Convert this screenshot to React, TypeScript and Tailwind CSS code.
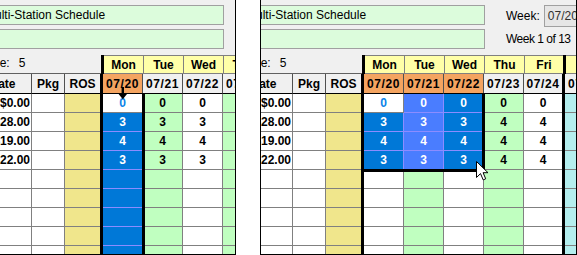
import React from "react";

type Variant = "left" | "right";
type Tone = "white" | "green" | "teal";
type Sel = "active" | "dark" | "light" | null;

const DAYS: { day: string; date: string; tone: Tone; w: string }[] = [
  { day: "Mon", date: "07/20", tone: "white", w: "w-[40px] border-r" },
  { day: "Tue", date: "07/21", tone: "green", w: "w-[40px] border-r" },
  { day: "Wed", date: "07/22", tone: "white", w: "w-[40px] border-r" },
  { day: "Thu", date: "07/23", tone: "green", w: "w-[40px] border-r" },
  { day: "Fri", date: "07/24", tone: "white", w: "w-[38px]" },
  { day: "", date: "07/25", tone: "teal", w: "w-[40px] border-r" },
];

const PRICES = ["$0.00", "$28.00", "$19.00", "$22.00"];
const QTY = [
  [0, 0, 0, 0, 0],
  [3, 3, 3, 4, 4],
  [4, 4, 4, 4, 4],
  [3, 3, 3, 4, 4],
];

const toneBg: Record<Tone, string> = {
  white: "bg-white",
  green: "bg-[#c0ffc0]",
  teal: "bg-[#b4eeee]",
};

const selCls = {
  active: "bg-white text-[#0a84e8] border-[#808080]",
  dark: "bg-[#0078d7] text-white border-[#8c8cff]",
  light: "bg-[#4a7dff] text-white border-[#8c8cff]",
};

function selState(v: Variant, r: number, c: number): Sel {
  if (v === "left") {
    if (c !== 0) return null;
    return r === 0 ? "active" : "dark";
  }
  if (r > 3 || c > 2) return null;
  if (r === 0 && c === 0) return "active";
  return c === 1 ? "light" : "dark";
}

function Sep() {
  return <div className="w-[3px] shrink-0 bg-black" />;
}

function Panel({ variant }: { variant: Variant }) {
  const orange = (c: number) => (variant === "left" ? c === 0 : c <= 2);

  return (
    <div className="relative w-[315px]">
      {/* title fields + week picker */}
      <div className="flex h-[55px] bg-[#f0f0f0]">
        <div className="-ml-[40px] flex w-[264px] shrink-0 flex-col gap-[4px] pt-[5px]">
          <div className="flex h-[20px] items-center border border-[#a0a0a0] bg-[#dcfcdc] pl-[24px]">
            Multi-Station Schedule
          </div>
          <div className="h-[20px] border border-[#a0a0a0] bg-[#dcfcdc]" />
        </div>
        <div className="ml-[21px] flex shrink-0 flex-col pt-[5px]">
          <div className="flex h-[22px] items-center">
            <span>Week:</span>
            <div className="ml-[4px] flex h-[22px] w-[60px] items-center border border-[#a0a0a0] bg-[#e6e6e6] pl-[3px] text-[#303030]">
              07/20
            </div>
          </div>
          <div className="mt-[5px] h-[14px] leading-[14px] tracking-[-0.5px]">Week 1 of 13</div>
        </div>
      </div>

      {/* day names */}
      <div className="flex h-[19px]">
        <div className="flex w-[101px] shrink-0 items-center border-b border-[#606060] bg-[#f0f0f0] pb-[2px]">
          <span className="-ml-[17px]">Size:</span>
          <span className="ml-[9px]">5</span>
        </div>
        <Sep />
        {DAYS.map((d, c) => (
          <React.Fragment key={d.date}>
            <div
              className={`${d.w} flex shrink-0 items-center justify-center border-y border-[#808080] bg-[#ffffa8] font-bold`}
            >
              {d.day}
            </div>
            {c === 4 && <Sep />}
          </React.Fragment>
        ))}
      </div>

      {/* column headings */}
      <div className="flex h-[20px] font-bold">
        <div className="-ml-[26px] flex w-[58px] shrink-0 items-center justify-center border-r border-b border-r-[#505050] border-b-black bg-[#f0f0f0]">
          Rate
        </div>
        <div className="flex w-[33px] shrink-0 items-center justify-center border-r border-b border-r-[#505050] border-b-black bg-[#f0f0f0]">
          Pkg
        </div>
        <div className="flex w-[35px] shrink-0 items-center justify-center border-b border-black bg-[#f0f0f0]">
          ROS
        </div>
        <Sep />
        {DAYS.map((d, c) => (
          <React.Fragment key={d.date}>
            <div
              className={`${d.w} flex shrink-0 items-center justify-center border-b border-r-[#505050] border-b-black tracking-[0.6px] ${
                orange(c) ? "bg-[#f4a460]" : "bg-[#f0f0f0]"
              }`}
            >
              {d.date}
            </div>
            {c === 4 && <Sep />}
          </React.Fragment>
        ))}
      </div>

      {/* rows */}
      {Array.from({ length: 9 }).map((_, r) => (
        <div key={r} className="flex h-[19px] font-bold">
          <div className="-ml-[26px] flex w-[58px] shrink-0 items-center justify-end border-r border-b border-[#808080] bg-white pr-[1px]">
            {PRICES[r] ?? ""}
          </div>
          <div className="w-[33px] shrink-0 border-r border-b border-[#808080] bg-white" />
          <div className="w-[35px] shrink-0 border-b border-[#808080] bg-[#f0e68c]" />
          <Sep />
          {DAYS.map((d, c) => {
            const s = selState(variant, r, c);
            const look = s ? selCls[s] : `${toneBg[d.tone]} border-[#808080]`;
            return (
              <React.Fragment key={d.date}>
                <div className={`${d.w} flex shrink-0 items-center justify-center border-b ${look}`}>
                  {QTY[r] && c < 5 ? QTY[r][c] : ""}
                </div>
                {c === 4 && <Sep />}
              </React.Fragment>
            );
          })}
        </div>
      ))}

      {/* selection outline + pointer */}
      {variant === "left" ? (
        <>
          <div className="absolute top-[93px] left-[101px] h-[170px] w-[44px] border-r-[3px] border-black" />
          <svg className="absolute top-[87px] left-[118px]" width="10" height="13" viewBox="0 0 10 13">
            <rect x="3.6" y="0" width="2.4" height="7" fill="#000" />
            <polygon points="0,6.3 9.6,6.3 4.8,12.3" fill="#000" />
          </svg>
        </>
      ) : (
        <>
          <div className="absolute top-[93px] left-[101px] h-[79px] w-[123px] border-r-[3px] border-b-[3px] border-black" />
          <svg className="absolute top-[161px] left-[215px]" width="13" height="21" viewBox="0 0 13 21">
            <path
              d="M0.5 0.5 V16.5 L4.5 12.6 L7.2 18.9 L9.7 17.8 L7.1 11.7 H12 Z"
              fill="#fff"
              stroke="#000"
              strokeWidth="1"
              strokeLinejoin="miter"
            />
          </svg>
        </>
      )}
    </div>
  );
}

export default function App() {
  return (
    <div className="flex h-[255px] w-[577px] bg-white font-['Liberation_Sans',Arial,sans-serif] text-[12px] text-black">
      <div className="h-[255px] w-[236px] shrink-0 overflow-hidden border-r border-b border-black">
        <Panel variant="left" />
      </div>
      <div className="ml-[24px] h-[255px] w-[317px] shrink-0 overflow-hidden border-x border-b border-black">
        <Panel variant="right" />
      </div>
    </div>
  );
}
